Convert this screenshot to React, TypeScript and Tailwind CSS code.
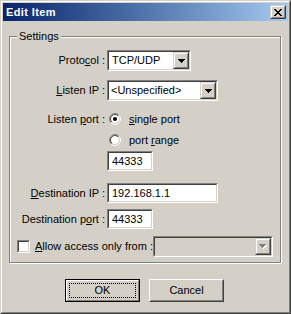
import React from "react";

function Arrow({ disabled }: { disabled?: boolean }) {
  if (disabled) {
    return (
      <svg width="8" height="5" viewBox="0 0 8 5" shapeRendering="crispEdges">
        <path d="M1 1h7v1H1zM2 2h5v1H2zM3 3h3v1H3zM4 4h1v1H4z" fill="#ffffff" />
        <path d="M0 0h7v1H0zM1 1h5v1H1zM2 2h3v1H2zM3 3h1v1H3z" fill="#808080" />
      </svg>
    );
  }
  return (
    <svg width="7" height="4" viewBox="0 0 7 4" shapeRendering="crispEdges">
      <path d="M0 0h7v1H0zM1 1h5v1H1zM2 2h3v1H2zM3 3h1v1H3z" fill="#000000" />
    </svg>
  );
}

function DropButton({ disabled }: { disabled?: boolean }) {
  return (
    <div className="w-[16px] h-full border border-t-[#d4d0c8] border-l-[#d4d0c8] border-b-[#404040] border-r-[#404040]">
      <div className="h-full bg-[#d4d0c8] flex items-center justify-center border border-t-white border-l-white border-b-[#808080] border-r-[#808080]">
        <Arrow disabled={disabled} />
      </div>
    </div>
  );
}

function Sunken({
  className,
  inner,
  children,
}: {
  className: string;
  inner: string;
  children?: React.ReactNode;
}) {
  return (
    <div
      className={`${className} border border-t-[#808080] border-l-[#808080] border-b-white border-r-white`}
    >
      <div
        className={`${inner} h-full flex border border-t-[#404040] border-l-[#404040] border-b-[#d4d0c8] border-r-[#d4d0c8]`}
      >
        {children}
      </div>
    </div>
  );
}

function Radio({ id, checked }: { id: string; checked?: boolean }) {
  return (
    <svg width="12" height="12" viewBox="0 0 12 12" className="shrink-0">
      <defs>
        <linearGradient id={`${id}o`} x1="0" y1="0" x2="1" y2="1">
          <stop offset="0.5" stopColor="#808080" />
          <stop offset="0.5" stopColor="#ffffff" />
        </linearGradient>
        <linearGradient id={`${id}i`} x1="0" y1="0" x2="1" y2="1">
          <stop offset="0.5" stopColor="#404040" />
          <stop offset="0.5" stopColor="#d4d0c8" />
        </linearGradient>
      </defs>
      <circle cx="6" cy="6" r="5.5" fill="none" stroke={`url(#${id}o)`} strokeWidth="1" />
      <circle cx="6" cy="6" r="4.5" fill="#ffffff" stroke={`url(#${id}i)`} strokeWidth="1" />
      {checked && <circle cx="6" cy="6" r="2" fill="#000000" />}
    </svg>
  );
}

function Label({ children }: { children: React.ReactNode }) {
  return (
    <div className="w-[95px] shrink-0 text-right whitespace-nowrap">{children}</div>
  );
}

function U({ children }: { children: React.ReactNode }) {
  return <span className="underline underline-offset-1">{children}</span>;
}

export default function App() {
  return (
    <div className="w-[291px] h-[314px] bg-[#d4d0c8] font-['Liberation_Sans',Arial,sans-serif] text-[11px] leading-[13px] text-black border border-t-[#d4d0c8] border-l-[#d4d0c8] border-b-[#404040] border-r-[#404040]">
      <div className="h-full border border-t-white border-l-white border-b-[#808080] border-r-[#808080] p-[1px] flex flex-col">
        {/* Title bar */}
        <div className="h-[18px] shrink-0 flex items-center bg-linear-to-r from-[#0a246a] to-[#a6caf0] pl-[3px] pr-[2px]">
          <span className="font-bold text-white text-[11px] tracking-[0.4px]">Edit Item</span>
          <div className="ml-auto w-[16px] h-[14px] border border-t-[#d4d0c8] border-l-[#d4d0c8] border-b-[#404040] border-r-[#404040]">
            <div className="h-full bg-[#d4d0c8] flex items-center justify-center border border-t-white border-l-white border-b-[#808080] border-r-[#808080]">
              <svg width="8" height="7" viewBox="0 0 8 7" shapeRendering="crispEdges">
                <path
                  d="M0 0h2v1H0zM6 0h2v1H6zM1 1h2v1H1zM5 1h2v1H5zM2 2h4v1H2zM3 3h2v1H3zM2 4h4v1H2zM1 5h2v1H1zM5 5h2v1H5zM0 6h2v1H0zM6 6h2v1H6z"
                  fill="#000000"
                />
              </svg>
            </div>
          </div>
        </div>

        {/* Group box */}
        <div className="ml-[6px] mt-[15px] w-[272px] relative border border-[#808080] shadow-[inset_1px_1px_0_#ffffff,1px_1px_0_#ffffff] flex flex-col pb-[5px]">
          <span className="absolute left-[7px] top-[-7px] bg-[#d4d0c8] px-[2px]">Settings</span>

          <div className="mt-[13px] flex items-center h-[21px]">
            <Label>
              Proto<U>c</U>ol :
            </Label>
            <Sunken className="ml-[2px] w-[84px] h-[21px]" inner="bg-white items-center">
              <span className="flex-1 pl-[3px]">TCP/UDP</span>
              <DropButton />
            </Sunken>
          </div>

          <div className="mt-[9px] flex items-center h-[21px]">
            <Label>
              <U>L</U>isten IP :
            </Label>
            <Sunken className="ml-[2px] w-[111px] h-[21px]" inner="bg-white items-center">
              <span className="flex-1 pl-[2px]">&lt;Unspecified&gt;</span>
              <DropButton />
            </Sunken>
          </div>

          <div className="mt-[12px] flex items-center h-[12px]">
            <Label>
              Listen <U>p</U>ort :
            </Label>
            <div className="ml-[4px] flex items-center gap-[8px]">
              <Radio id="r1" checked />
              <span>
                <U>s</U>ingle port
              </span>
            </div>
          </div>

          <div className="mt-[9px] flex items-center h-[12px]">
            <div className="w-[95px] shrink-0" />
            <div className="ml-[4px] flex items-center gap-[8px]">
              <Radio id="r2" />
              <span>
                port <U>r</U>ange
              </span>
            </div>
          </div>

          <div className="mt-[5px] flex items-center h-[20px]">
            <div className="w-[95px] shrink-0" />
            <Sunken className="ml-[2px] w-[46px] h-[20px]" inner="bg-white items-center">
              <span className="pl-[3px]">44333</span>
            </Sunken>
          </div>

          <div className="mt-[12px] flex items-center h-[20px]">
            <Label>
              <U>D</U>estination IP :
            </Label>
            <Sunken className="ml-[2px] w-[111px] h-[20px]" inner="bg-white items-center">
              <span className="pl-[3px]">192.168.1.1</span>
            </Sunken>
          </div>

          <div className="mt-[6px] flex items-center h-[20px]">
            <Label>
              Destination p<U>o</U>rt :
            </Label>
            <Sunken className="ml-[2px] w-[46px] h-[20px]" inner="bg-white items-center">
              <span className="pl-[3px]">44333</span>
            </Sunken>
          </div>

          <div className="mt-[7px] flex items-center h-[21px]">
            <div className="ml-[7px] w-[13px] h-[13px] shrink-0 border border-t-[#808080] border-l-[#808080] border-b-white border-r-white">
              <div className="h-full bg-white border border-t-[#404040] border-l-[#404040] border-b-[#d4d0c8] border-r-[#d4d0c8]" />
            </div>
            <span className="ml-[5px] w-[118px] whitespace-nowrap">
              <U>A</U>llow access only from :
            </span>
            <Sunken className="w-[120px] h-[21px]" inner="bg-[#d4d0c8] items-center justify-end">
              <DropButton disabled />
            </Sunken>
          </div>
        </div>

        {/* Buttons */}
        <div className="mt-[16px] ml-[62px] flex gap-[9px]">
          <div className="w-[75px] h-[23px] border border-black">
            <div className="h-full border border-t-white border-l-white border-b-[#808080] border-r-[#808080] p-[2px]">
              <div className="h-full border border-dotted border-black flex items-center justify-center">
                OK
              </div>
            </div>
          </div>
          <div className="w-[75px] h-[23px] border border-t-white border-l-white border-b-[#404040] border-r-[#404040]">
            <div className="h-full border border-t-[#d4d0c8] border-l-[#d4d0c8] border-b-[#808080] border-r-[#808080] flex items-center justify-center">
              Cancel
            </div>
          </div>
        </div>
      </div>
    </div>
  );
}
